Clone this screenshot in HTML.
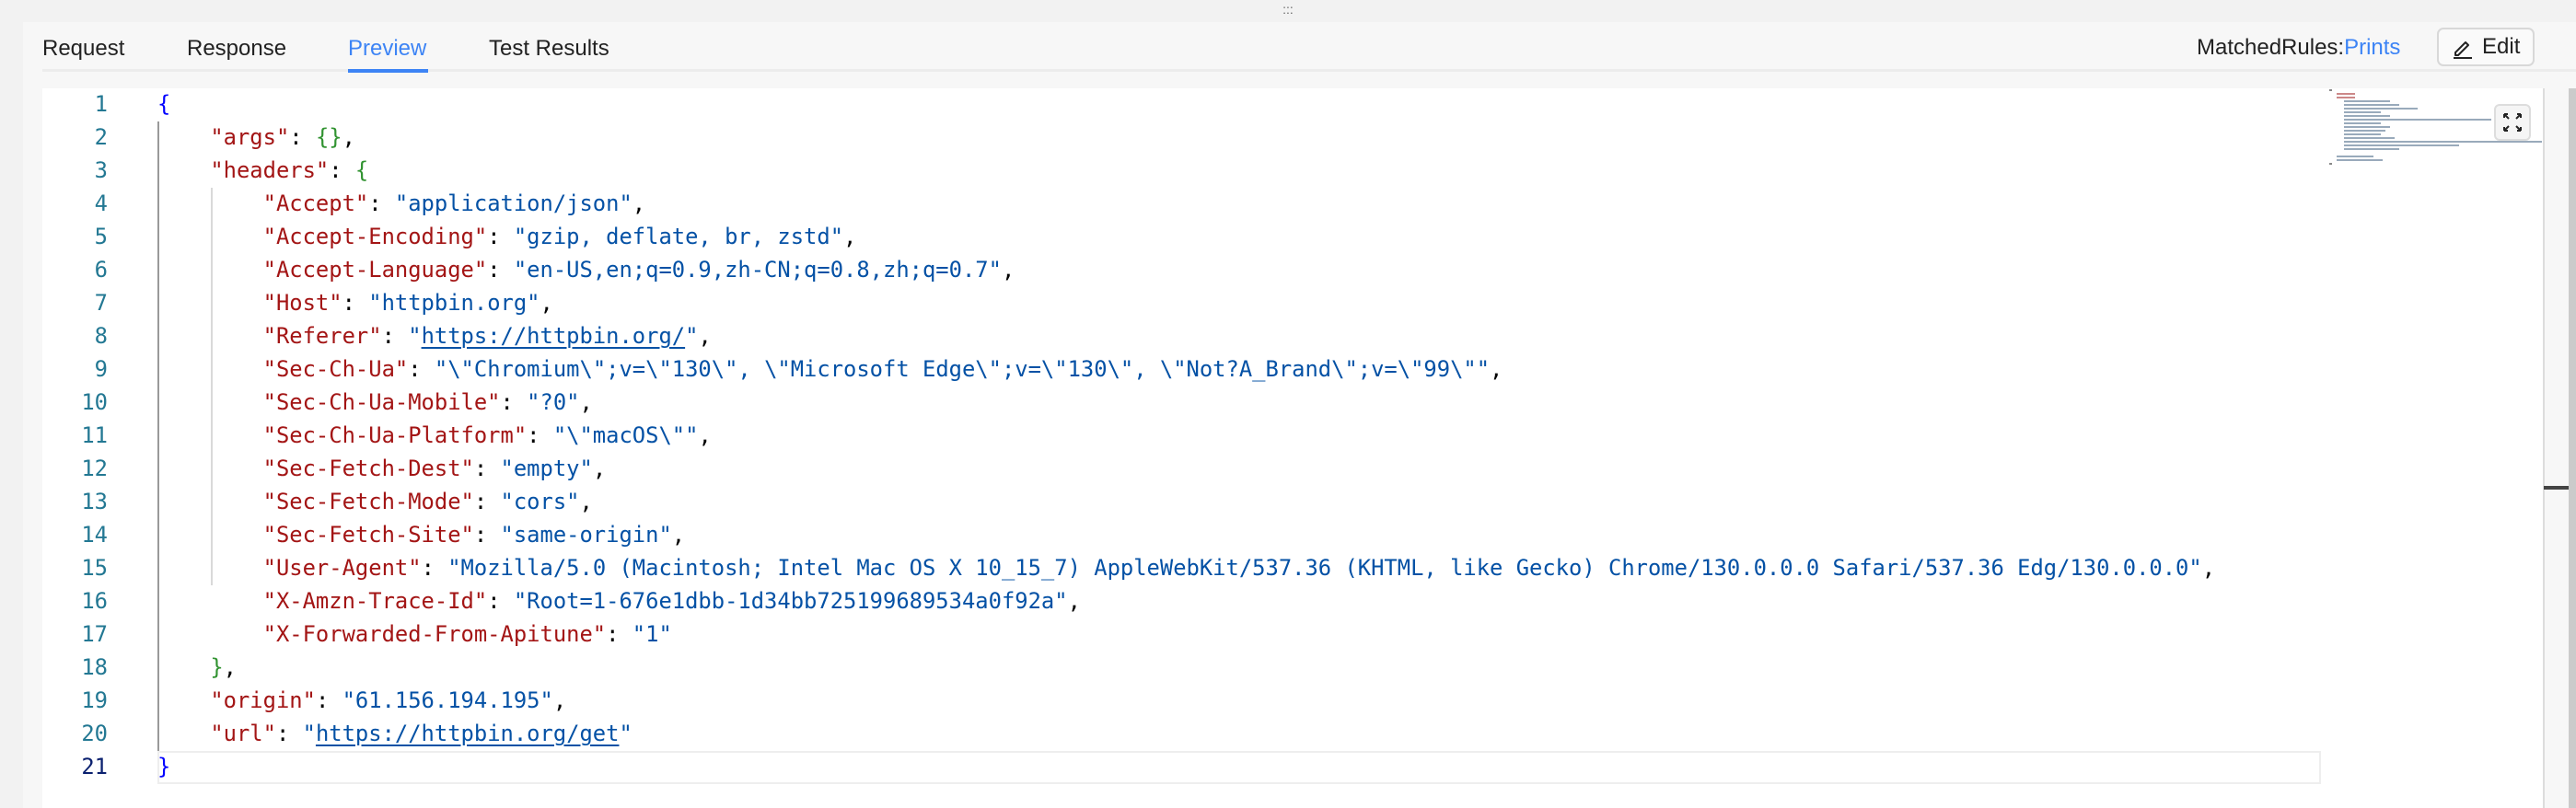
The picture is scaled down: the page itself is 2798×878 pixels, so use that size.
<!DOCTYPE html>
<html><head><meta charset="utf-8">
<style>
*{margin:0;padding:0;box-sizing:border-box}
html,body{width:2798px;height:878px;overflow:hidden;background:#f2f2f2;font-family:"Liberation Sans",sans-serif}
.top{position:absolute;left:0;top:0;width:2798px;height:24px;background:#f2f2f2;text-align:center;font-size:14px;color:#666;line-height:20px}
.panel{position:absolute;left:25px;top:24px;right:0;bottom:0;background:#f7f7f7}
.tabs{position:absolute;left:46px;top:24px;width:2752px;height:54px;border-bottom:3px solid #ececec}
.tab{position:absolute;top:38px;font-size:24px;color:#222;line-height:30px}
.tab.act{color:#3d84f5}
.ul{position:absolute;left:378px;top:75px;width:87px;height:4px;background:#3d84f5}
.mr{position:absolute;left:2386px;top:37px;font-size:24px;color:#222;line-height:30px}
.mr span{color:#3d84f5}
.edit{position:absolute;left:2647px;top:30px;width:106px;height:42px;border:2px solid #d8d8d8;border-radius:7px;background:#fafafa;font-size:24px;color:#222;line-height:38px;padding-left:47px}
.editor{position:absolute;left:46px;top:96px;width:2717px;height:782px;background:#fff}
.code{position:absolute;left:0;top:95px;font-family:"DejaVu Sans Mono","Liberation Mono",monospace;font-size:23.8px;white-space:pre}
.ln{position:absolute;left:46px;width:71px;text-align:right;color:#237893;height:36px;line-height:36px}
.l{position:absolute;left:171px;height:36px;line-height:36px}
.k{color:#a31515}.s{color:#0451a5}.b{color:#0000ff}.g{color:#319331}.p{color:#000}
.u{text-decoration:underline;text-decoration-thickness:2px;text-underline-offset:4px}
.guide{position:absolute;width:2px;background:#d9d9d9}
.sb{position:absolute;left:2762px;top:96px;width:2px;height:782px;background:#ddd}
.sbb{position:absolute;left:2790px;top:96px;width:8px;height:782px;background:#cbcbcb}
.mark{position:absolute;left:2763px;top:528px;width:27px;height:4px;background:#444}
.exp{position:absolute;left:2709px;top:113px;width:40px;height:40px;border:2px solid #ddd;border-radius:6px;background:#f5f5f5}
.mm div{position:absolute;height:2px}
</style></head><body>
<div class="top">:::</div>
<div class="panel"></div>
<div class="tabs"></div>
<div class="tab" style="left:46px">Request</div>
<div class="tab" style="left:203px">Response</div>
<div class="tab act" style="left:378px">Preview</div>
<div class="tab" style="left:531px">Test Results</div>
<div class="ul"></div>
<div class="mr">MatchedRules:<span>Prints</span></div>
<div class="edit"><svg style="position:absolute;left:14px;top:8px" width="24" height="24" viewBox="0 0 24 24" fill="none" stroke="#222" stroke-width="2" stroke-linejoin="round"><path d="M4 17l11-11 3 3-11 11H4z"/><path d="M2 23h20"/></svg>Edit</div>
<div class="editor"></div>
<div class="guide" style="left:171px;top:132px;height:684px;background:#999"></div>
<div class="guide" style="left:229px;top:204px;height:432px"></div>
<div style="position:absolute;left:171px;top:816px;width:2350px;height:36px;border:2px solid #eee"></div>
<div class="code">
<div class="ln" style="top:0">1</div><div class="l" style="top:0"><span class="b">{</span></div>
<div class="ln" style="top:36px">2</div><div class="l" style="top:36px">    <span class="k">"args"</span><span class="p">: </span><span class="g">{}</span><span class="p">,</span></div>
<div class="ln" style="top:72px">3</div><div class="l" style="top:72px">    <span class="k">"headers"</span><span class="p">: </span><span class="g">{</span></div>
<div class="ln" style="top:108px">4</div><div class="l" style="top:108px">        <span class="k">"Accept"</span><span class="p">: </span><span class="s">"application/json"</span><span class="p">,</span></div>
<div class="ln" style="top:144px">5</div><div class="l" style="top:144px">        <span class="k">"Accept-Encoding"</span><span class="p">: </span><span class="s">"gzip, deflate, br, zstd"</span><span class="p">,</span></div>
<div class="ln" style="top:180px">6</div><div class="l" style="top:180px">        <span class="k">"Accept-Language"</span><span class="p">: </span><span class="s">"en-US,en;q=0.9,zh-CN;q=0.8,zh;q=0.7"</span><span class="p">,</span></div>
<div class="ln" style="top:216px">7</div><div class="l" style="top:216px">        <span class="k">"Host"</span><span class="p">: </span><span class="s">"httpbin.org"</span><span class="p">,</span></div>
<div class="ln" style="top:252px">8</div><div class="l" style="top:252px">        <span class="k">"Referer"</span><span class="p">: </span><span class="s">"<span class="u">https://httpbin.org/</span>"</span><span class="p">,</span></div>
<div class="ln" style="top:288px">9</div><div class="l" style="top:288px">        <span class="k">"Sec-Ch-Ua"</span><span class="p">: </span><span class="s">"\"Chromium\";v=\"130\", \"Microsoft Edge\";v=\"130\", \"Not?A_Brand\";v=\"99\""</span><span class="p">,</span></div>
<div class="ln" style="top:324px">10</div><div class="l" style="top:324px">        <span class="k">"Sec-Ch-Ua-Mobile"</span><span class="p">: </span><span class="s">"?0"</span><span class="p">,</span></div>
<div class="ln" style="top:360px">11</div><div class="l" style="top:360px">        <span class="k">"Sec-Ch-Ua-Platform"</span><span class="p">: </span><span class="s">"\"macOS\""</span><span class="p">,</span></div>
<div class="ln" style="top:396px">12</div><div class="l" style="top:396px">        <span class="k">"Sec-Fetch-Dest"</span><span class="p">: </span><span class="s">"empty"</span><span class="p">,</span></div>
<div class="ln" style="top:432px">13</div><div class="l" style="top:432px">        <span class="k">"Sec-Fetch-Mode"</span><span class="p">: </span><span class="s">"cors"</span><span class="p">,</span></div>
<div class="ln" style="top:468px">14</div><div class="l" style="top:468px">        <span class="k">"Sec-Fetch-Site"</span><span class="p">: </span><span class="s">"same-origin"</span><span class="p">,</span></div>
<div class="ln" style="top:504px">15</div><div class="l" style="top:504px">        <span class="k">"User-Agent"</span><span class="p">: </span><span class="s">"Mozilla/5.0 (Macintosh; Intel Mac OS X 10_15_7) AppleWebKit/537.36 (KHTML, like Gecko) Chrome/130.0.0.0 Safari/537.36 Edg/130.0.0.0"</span><span class="p">,</span></div>
<div class="ln" style="top:540px">16</div><div class="l" style="top:540px">        <span class="k">"X-Amzn-Trace-Id"</span><span class="p">: </span><span class="s">"Root=1-676e1dbb-1d34bb725199689534a0f92a"</span><span class="p">,</span></div>
<div class="ln" style="top:576px">17</div><div class="l" style="top:576px">        <span class="k">"X-Forwarded-From-Apitune"</span><span class="p">: </span><span class="s">"1"</span></div>
<div class="ln" style="top:612px">18</div><div class="l" style="top:612px">    <span class="g">}</span><span class="p">,</span></div>
<div class="ln" style="top:648px">19</div><div class="l" style="top:648px">    <span class="k">"origin"</span><span class="p">: </span><span class="s">"61.156.194.195"</span><span class="p">,</span></div>
<div class="ln" style="top:684px">20</div><div class="l" style="top:684px">    <span class="k">"url"</span><span class="p">: </span><span class="s">"<span class="u">https://httpbin.org/get</span>"</span></div>
<div class="ln" style="top:720px;color:#0b216f">21</div><div class="l" style="top:720px"><span class="b">}</span></div>
</div>
<div class="mm">
<div style="left:2530px;top:97px;width:3px;background:#888"></div>
<div style="left:2538px;top:101px;width:20px;background:#c88"></div>
<div style="left:2538px;top:105px;width:20px;background:#c88"></div>
<div style="left:2546px;top:109px;width:50px;background:#9ab"></div>
<div style="left:2546px;top:113px;width:60px;background:#9ab"></div>
<div style="left:2546px;top:117px;width:80px;background:#9ab"></div>
<div style="left:2546px;top:121px;width:40px;background:#9ab"></div>
<div style="left:2546px;top:125px;width:50px;background:#9ab"></div>
<div style="left:2546px;top:129px;width:160px;background:#9ab"></div>
<div style="left:2546px;top:133px;width:40px;background:#9ab"></div>
<div style="left:2546px;top:137px;width:50px;background:#9ab"></div>
<div style="left:2546px;top:141px;width:45px;background:#9ab"></div>
<div style="left:2546px;top:145px;width:40px;background:#9ab"></div>
<div style="left:2546px;top:149px;width:55px;background:#9ab"></div>
<div style="left:2546px;top:153px;width:215px;background:#9ab"></div>
<div style="left:2546px;top:157px;width:125px;background:#9ab"></div>
<div style="left:2546px;top:161px;width:60px;background:#9ab"></div>
<div style="left:2538px;top:169px;width:40px;background:#9ab"></div>
<div style="left:2538px;top:173px;width:50px;background:#9ab"></div>
<div style="left:2530px;top:177px;width:3px;background:#888"></div>
</div>
<div class="exp"><svg style="position:absolute;left:8px;top:8px" width="20" height="20" viewBox="0 0 20 20" fill="none" stroke="#222" stroke-width="2"><path d="M1 1l5 5M1 1h4M1 1v4M19 1l-5 5M19 1h-4M19 1v4M1 19l5-5M1 19h4M1 19v-4M19 19l-5-5M19 19h-4M19 19v-4"/></svg></div>
<div class="sb"></div>
<div class="sbb"></div>
<div class="mark"></div>
</body></html>
